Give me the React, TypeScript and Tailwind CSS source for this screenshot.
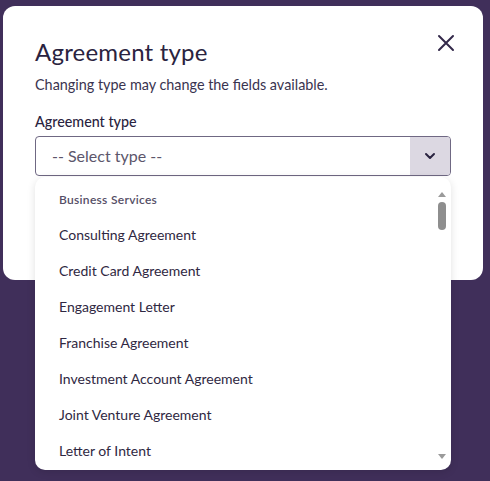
import React from "react";

const items = [
  "Consulting Agreement",
  "Credit Card Agreement",
  "Engagement Letter",
  "Franchise Agreement",
  "Investment Account Agreement",
  "Joint Venture Agreement",
  "Letter of Intent",
];

export default function App() {
  return (
    <div
      className="w-[490px] h-[481px] overflow-hidden pt-[6px] pl-[3px] bg-[#402f5a]"
      style={{ fontFamily: "Lato, 'Noto Sans', sans-serif" }}
    >
      <div className="relative w-[480px] h-[274px] rounded-[12px] bg-white pt-[30px] px-[32px] text-[#2a2340]">
        <button className="absolute right-[27px] top-[27px] w-[20px] h-[20px] flex items-center justify-center text-[#33294a]">
          <svg width="18" height="18" viewBox="0 0 18 18" fill="none" stroke="currentColor" strokeWidth="2" strokeLinecap="round">
            <path d="M2 2L16 16M16 2L2 16" />
          </svg>
        </button>
        <h2 className="text-[24px] leading-[32px] font-normal tracking-[0.2px]">Agreement type</h2>
        <p className="mt-[7px] text-[14.4px] leading-[20px] text-[#3a3450]">
          Changing type may change the fields available.
        </p>
        <div className="mt-[17px] text-[14.3px] leading-[20px] font-medium text-[#2a2340]">Agreement type</div>
        <div className="relative mt-[4px]">
          <div className="flex h-[40px] w-[416px] rounded-[4px] border border-[#6f6883] overflow-hidden">
            <div className="flex-1 flex items-center pl-[16px] text-[16px] text-[#5c566b]">-- Select type --</div>
            <div className="w-[40px] bg-[#dcd8e2] flex items-center justify-center text-[#2a2340]">
              <svg width="12" height="8" viewBox="0 0 12 8" fill="none" stroke="currentColor" strokeWidth="2" strokeLinecap="round" strokeLinejoin="round">
                <path d="M2 2L6 6L10 2" />
              </svg>
            </div>
          </div>
          <div className="absolute left-0 top-[41px] w-[416px] h-[293px] rounded-[10px] bg-white shadow-[0_2px_8px_rgba(0,0,0,0.12)] overflow-hidden">
            <div className="pt-[12px] pl-[24px] pr-[24px]">
              <div className="h-[27px] pb-[5px] flex items-center text-[12px] tracking-[0.3px] font-semibold text-[#554e66]">Business Services</div>
              {items.map((it) => (
                <div key={it} className="h-[36px] flex items-center text-[14px] text-[#2f2842]">
                  {it}
                </div>
              ))}
            </div>
            <div className="absolute right-[3px] top-0 bottom-0 w-[12px] flex flex-col items-center">
              <div className="mt-[15px] w-0 h-0 border-l-[4px] border-r-[4px] border-b-[5px] border-l-transparent border-r-transparent border-b-[#9a9a9a]" />
              <div className="mt-[5px] w-[8px] h-[28px] rounded-full bg-[#8e8e8e]" />
              <div className="mt-auto mb-[11px] w-0 h-0 border-l-[4px] border-r-[4px] border-t-[5px] border-l-transparent border-r-transparent border-t-[#9a9a9a]" />
            </div>
          </div>
        </div>
      </div>
    </div>
  );
}
